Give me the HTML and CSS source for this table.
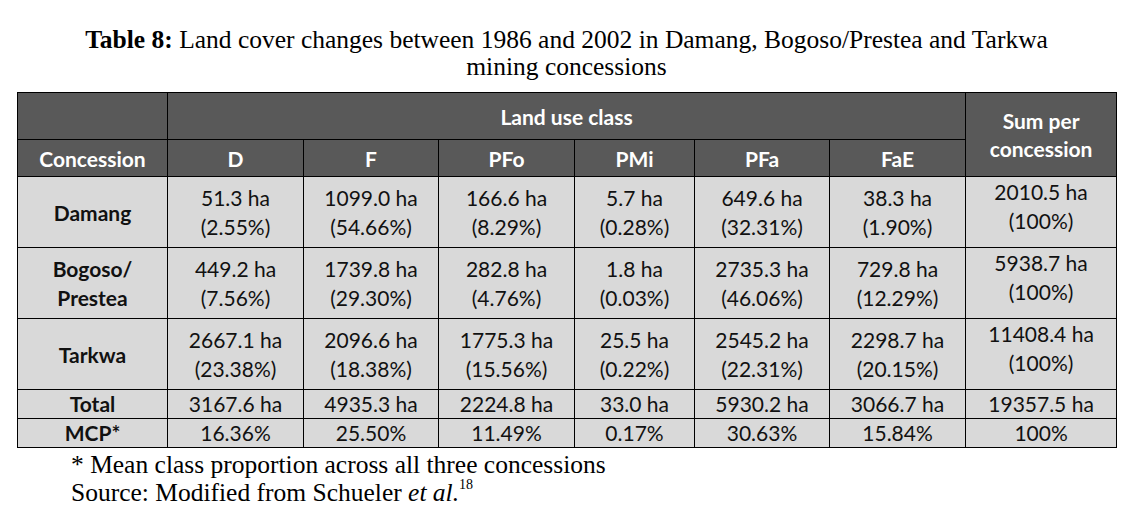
FILE: index.html
```html
<!DOCTYPE html>
<html lang="en">
<head>
<meta charset="utf-8">
<title>Table 8</title>
<link rel="stylesheet" href="styles.css">
</head>
<body>
<div class="page">
  <h1 class="caption"><b>Table 8:</b> Land cover changes between 1986 and 2002 in Damang, Bogoso/Prestea and Tarkwa<br>mining concessions</h1>
  <table class="data">
    <colgroup>
      <col class="c-name"><col class="c-d"><col class="c-f"><col class="c-pfo"><col class="c-pmi"><col class="c-pfa"><col class="c-fae"><col class="c-sum">
    </colgroup>
    <thead>
      <tr class="h1">
        <th></th>
        <th colspan="6">Land use class</th>
        <th rowspan="2" class="sum">Sum per<br>concession</th>
      </tr>
      <tr class="h2">
        <th>Concession</th>
        <th>D</th><th>F</th><th>PFo</th><th>PMi</th><th>PFa</th><th>FaE</th>
      </tr>
    </thead>
    <tbody>
      <tr class="two">
        <th>Damang</th>
        <td>51.3 ha<br>(2.55%)</td><td>1099.0 ha<br>(54.66%)</td><td>166.6 ha<br>(8.29%)</td><td>5.7 ha<br>(0.28%)</td><td>649.6 ha<br>(32.31%)</td><td>38.3 ha<br>(1.90%)</td><td class="top">2010.5 ha<br>(100%)</td>
      </tr>
      <tr class="two">
        <th>Bogoso/<br>Prestea</th>
        <td>449.2 ha<br>(7.56%)</td><td>1739.8 ha<br>(29.30%)</td><td>282.8 ha<br>(4.76%)</td><td>1.8 ha<br>(0.03%)</td><td>2735.3 ha<br>(46.06%)</td><td>729.8 ha<br>(12.29%)</td><td class="top">5938.7 ha<br>(100%)</td>
      </tr>
      <tr class="two">
        <th>Tarkwa</th>
        <td>2667.1 ha<br>(23.38%)</td><td>2096.6 ha<br>(18.38%)</td><td>1775.3 ha<br>(15.56%)</td><td>25.5 ha<br>(0.22%)</td><td>2545.2 ha<br>(22.31%)</td><td>2298.7 ha<br>(20.15%)</td><td class="top">11408.4 ha<br>(100%)</td>
      </tr>
      <tr class="one">
        <th>Total</th>
        <td>3167.6 ha</td><td>4935.3 ha</td><td>2224.8 ha</td><td>33.0 ha</td><td>5930.2 ha</td><td>3066.7 ha</td><td>19357.5 ha</td>
      </tr>
      <tr class="one">
        <th>MCP*</th>
        <td>16.36%</td><td>25.50%</td><td>11.49%</td><td>0.17%</td><td>30.63%</td><td>15.84%</td><td>100%</td>
      </tr>
    </tbody>
  </table>
  <div class="notes">
    <p>* Mean class proportion across all three concessions</p>
    <p>Source: Modified from Schueler <i>et al.</i><sup>18</sup></p>
  </div>
</div>
</body>
</html>
```

FILE: styles.css
```css
html, body {
  margin: 0;
  padding: 0;
  background: #ffffff;
}

.page {
  width: 1099px;
  margin-left: 17px;
  padding-top: 26px;
}

.caption {
  margin: 0 0 12px 0;
  font-family: "Liberation Serif", "Times New Roman", serif;
  font-weight: normal;
  font-size: 25.5px;
  line-height: 27px;
  text-align: center;
  color: #000;
}

.caption b {
  font-weight: bold;
}

.data {
  width: 1099px;
  table-layout: fixed;
  border-collapse: collapse;
  font-family: Lato, "Open Sans", sans-serif;
  font-size: 21px;
  color: #111;
}

.c-name { width: 150px; }
.c-d { width: 136px; }
.c-f { width: 135px; }
.c-pfo { width: 136px; }
.c-pmi { width: 120px; }
.c-pfa { width: 135px; }
.c-fae { width: 136px; }
.c-sum { width: 151px; }

.data th,
.data td {
  border: 1px solid #000;
  padding: 0;
  text-align: center;
  vertical-align: middle;
}

.data thead th {
  background: #595959;
  color: #ffffff;
  font-weight: bold;
}

.data tbody th,
.data tbody td {
  background: #d9d9d9;
}

.data tbody th {
  font-weight: bold;
  color: #111;
}

.h1 th { height: 46px; }
.h2 th { height: 36px; }
.sum { line-height: 28px; padding-top: 4px; }

.two th,
.two td {
  height: 70px;
  line-height: 29px;
}

.two td.top {
  vertical-align: top;
  padding-top: 0;
}

.one th,
.one td {
  height: 28px;
  line-height: 28px;
}

.notes {
  margin-top: 3px;
  margin-left: 54px;
  font-family: "Liberation Serif", "Times New Roman", serif;
  font-size: 25.5px;
  line-height: 28px;
  color: #000;
}

.notes p {
  margin: 0;
}

.notes sup {
  font-size: 14px;
  line-height: 0;
  vertical-align: 12px;
}
```
